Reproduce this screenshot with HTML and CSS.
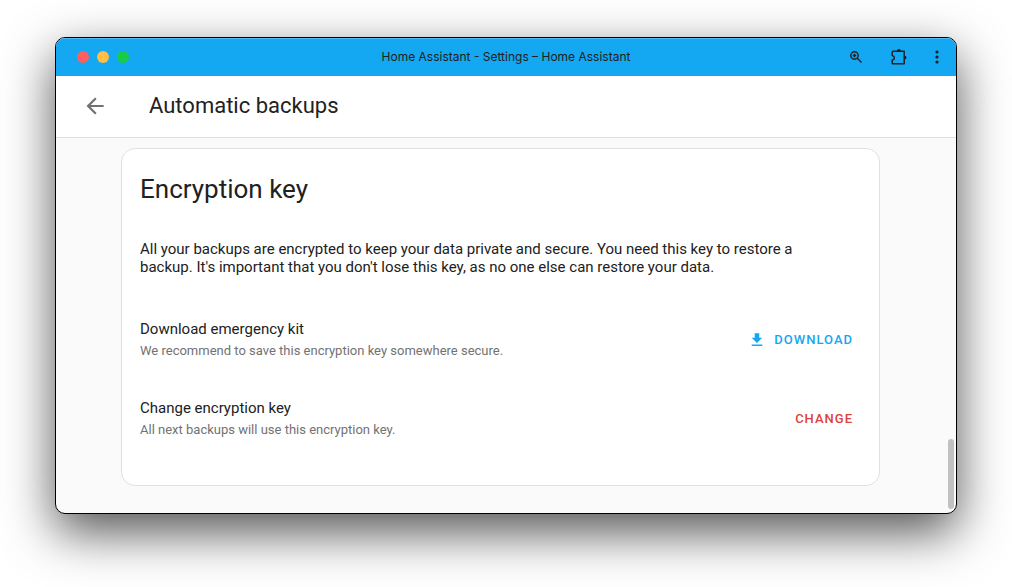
FILE: index.html
```html
<!DOCTYPE html>
<html lang="en">
<head>
<meta charset="utf-8">
<title>Home Assistant - Settings</title>
<meta name="viewport" content="width=device-width, initial-scale=1">
<link rel="stylesheet" href="styles.css">
</head>
<body>
<div class="window">
  <header class="titlebar">
    <div class="lights">
      <span class="light light-close"></span>
      <span class="light light-minimize"></span>
      <span class="light light-zoom"></span>
    </div>
    <div class="window-title">Home Assistant - Settings – Home Assistant</div>
    <div class="window-actions">
      <button class="window-button" type="button" aria-label="Zoom">
        <svg width="14" height="14" viewBox="0 0 14 14" fill="none" stroke="currentColor" stroke-width="1.4"><circle cx="5.500" cy="5.500" r="3.700"/><path d="M8.300 8.300l4.200 4.200M5.500 3.800v3.400M3.800 5.500h3.400"/></svg>
      </button>
      <button class="window-button" type="button" aria-label="Extensions">
        <svg width="18" height="18" viewBox="0 0 18 18"><path d="M3 3.300h11.200v12.400H3c-.5 0-.8-.3-.8-.8v-2.800c1.300-.2 2.100-1 2.100-2.300S3.500 7.700 2.200 7.400V4.100c0-.5.3-.8.8-.8z" fill="none" stroke="currentColor" stroke-width="1.500" stroke-linejoin="round"/><path d="M6.900 3a2 2 0 0 1 4 0zM14.600 7.700a1.900 1.900 0 0 1 0 3.800z" fill="currentColor"/></svg>
      </button>
      <button class="window-button" type="button" aria-label="Menu">
        <svg width="4" height="14" viewBox="0 0 4 14" fill="currentColor"><circle cx="2" cy="2" r="1.600"/><circle cx="2" cy="7" r="1.600"/><circle cx="2" cy="12" r="1.600"/></svg>
      </button>
    </div>
  </header>
  <div class="toolbar">
    <button class="back" type="button" aria-label="Back">
      <svg width="26" height="26" viewBox="0 0 24 24" fill="currentColor"><path d="M20 11v2H8l5.500 5.500-1.420 1.420L4.160 12l7.920-7.920L13.500 5.500 8 11h12z"/></svg>
    </button>
    <h1 class="page-title">Automatic backups</h1>
  </div>
  <main class="content">
    <section class="card">
      <h2 class="card-title">Encryption key</h2>
      <p class="card-text">All your backups are encrypted to keep your data private and secure. You need this key to restore a backup. It's important that you don't lose this key, as no one else can restore your data.</p>
      <div class="row">
        <div class="row-text">
          <h3 class="row-title">Download emergency kit</h3>
          <p class="row-note">We recommend to save this encryption key somewhere secure.</p>
        </div>
        <button class="action" type="button">
          <svg width="18" height="18" viewBox="0 0 24 24" fill="currentColor"><path d="M5 20h14v-2H5v2zM19 9h-4V3H9v6H5l7 7 7-7z"/></svg>
          DOWNLOAD
        </button>
      </div>
      <div class="row">
        <div class="row-text">
          <h3 class="row-title">Change encryption key</h3>
          <p class="row-note">All next backups will use this encryption key.</p>
        </div>
        <button class="action action-danger" type="button">CHANGE</button>
      </div>
    </section>
    <div class="scroll-thumb"></div>
  </main>
</div>
</body>
</html>
```
FILE: styles.css
```css
* {
  box-sizing: border-box;
}

body {
  margin: 0;
  padding: 37px 55px 73px;
  background: #fff;
  color: #212121;
  font-family: Roboto, "Liberation Sans", sans-serif;
  overflow: hidden;
}

h1, h2, h3, p {
  margin: 0;
  font-weight: 400;
}

button {
  padding: 0;
  border: 0;
  background: none;
  color: inherit;
  font-family: inherit;
  cursor: pointer;
}

svg {
  display: block;
}

.window {
  border: 1px solid #000;
  border-radius: 10px;
  background: #fafafa;
  overflow: hidden;
  box-shadow: 0 18px 50px rgba(0, 0, 0, 0.68);
}

.titlebar {
  display: grid;
  grid-template-columns: 1fr auto 1fr;
  align-items: center;
  height: 38px;
  padding: 0 17px;
  background: #14a7f2;
  box-shadow: inset 0 1px 0 #4fbdf6;
}

.lights {
  display: flex;
  gap: 8px;
  padding-left: 4px;
}

.light {
  width: 12px;
  height: 12px;
  border-radius: 50%;
}

.light-close {
  background: #ff5f5f;
}

.light-minimize {
  background: #ffbe45;
}

.light-zoom {
  background: #1acb4a;
}

.window-title {
  font-family: Inter, sans-serif;
  font-size: 12px;
  line-height: 16px;
  padding-bottom: 1px;
}

.window-actions {
  display: flex;
  align-items: center;
  justify-content: flex-end;
  gap: 27px;
}

.toolbar {
  display: flex;
  align-items: center;
  gap: 41px;
  height: 62px;
  padding: 0 26px 2px;
  border-bottom: 1px solid #e0e0e0;
  background: #fff;
}

.back {
  color: #727272;
}

.page-title {
  font-size: 22px;
  line-height: 28px;
}

.content {
  position: relative;
  padding: 10px 76px 27px 65px;
}

.card {
  padding: 16px 18px 27px;
  border: 1px solid #e0e0e0;
  border-radius: 14px;
  background: #fff;
}

.card-title {
  font-size: 26px;
  line-height: 48px;
}

.card-text {
  margin: 27px 0 24px;
  padding-right: 24px;
  font-size: 15px;
  line-height: 18px;
}

.row {
  display: flex;
  align-items: center;
  justify-content: space-between;
  gap: 16px;
  height: 79px;
}

.row-title {
  font-size: 15px;
  line-height: 22px;
}

.row-note {
  color: #727272;
  font-size: 13px;
  line-height: 22px;
}

.action {
  display: flex;
  align-items: center;
  gap: 8px;
  padding: 8px;
  color: #14a7f2;
  font-size: 13px;
  font-weight: 500;
  letter-spacing: 1px;
}

.action-danger {
  color: #db4437;
}

.scroll-thumb {
  position: absolute;
  right: 2px;
  bottom: 4px;
  width: 6px;
  height: 70px;
  border-radius: 3px;
  background: #c1c1c1;
}
```
